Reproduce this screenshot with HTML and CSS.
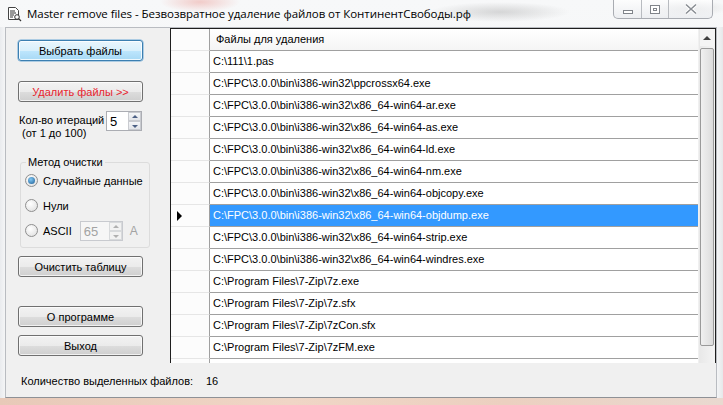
FILE: index.html
```html
<!DOCTYPE html>
<html>
<head>
<meta charset="utf-8">
<link rel="stylesheet" href="styles.css">
</head>
<body>
<div class="window">
  <div class="titlebar">
    <svg class="appicon" width="16" height="16" viewBox="0 0 16 16">
      <path d="M2.5 1.5h7l3 3v9h-10z" fill="#fff" stroke="#444"/>
      <path d="M4 5h5M4 7h6M4 9h4M4 11h3" stroke="#333"/>
      <circle cx="11" cy="11" r="2.3" fill="#fff" stroke="#333"/>
      <path d="M12.7 12.7l2.3 2.3" stroke="#333" stroke-width="1.2"/>
    </svg>
    <span class="title">Master remove files - Безвозвратное удаление файлов от КонтинентСвободы.рф</span>
    <div class="caption-buttons">
      <div class="cbtn cmin"><span class="minbar"></span></div>
      <div class="cbtn cmax"><span class="maxbox"></span></div>
      <div class="cbtn cclose">
        <svg width="14" height="12" viewBox="0 0 14 12"><path d="M2 1.5l10 9M12 1.5l-10 9" stroke="#fff" stroke-width="3.4"/><path d="M2 1.5l10 9M12 1.5l-10 9" stroke="#8a8e94" stroke-width="1.6"/></svg>
      </div>
    </div>
  </div>
  <div class="middle">
    <div class="frame-side"></div>
    <div class="client">
      <div class="leftpanel">
        <button class="btn btn-default">Выбрать файлы</button>
        <button class="btn btn-red">Удалить файлы &gt;&gt;</button>
        <div class="iter">
          <div class="iter-label">Кол-во итераций<br>&nbsp;(от 1 до 100)</div>
          <div class="spin">
            <span class="spin-val">5</span>
            <div class="spin-btns"><span class="sb up"></span><span class="sb down"></span></div>
          </div>
        </div>
        <fieldset class="group">
          <legend>Метод очистки</legend>
          <div class="radio-row"><span class="radio checked"></span><span>Случайные данные</span></div>
          <div class="radio-row"><span class="radio"></span><span>Нули</span></div>
          <div class="radio-row">
            <span class="radio"></span><span>ASCII</span>
            <div class="spin spin-disabled">
              <span class="spin-val">65</span>
              <div class="spin-btns"><span class="sb up"></span><span class="sb down"></span></div>
            </div>
            <span class="char-a">A</span>
          </div>
        </fieldset>
        <button class="btn btn-clear">Очистить таблицу</button>
        <button class="btn btn-about">О программе</button>
        <button class="btn btn-exit">Выход</button>
      </div>
      <div class="gridwrap">
        <div class="grid">
          <div class="grid-rows">
            <div class="row header"><div class="ind"></div><div class="cell">Файлы для удаления</div></div>
            <div class="row"><div class="ind"></div><div class="cell">C:\111\1.pas</div></div>
            <div class="row"><div class="ind"></div><div class="cell">C:\FPC\3.0.0\bin\i386-win32\ppcrossx64.exe</div></div>
            <div class="row"><div class="ind"></div><div class="cell">C:\FPC\3.0.0\bin\i386-win32\x86_64-win64-ar.exe</div></div>
            <div class="row"><div class="ind"></div><div class="cell">C:\FPC\3.0.0\bin\i386-win32\x86_64-win64-as.exe</div></div>
            <div class="row"><div class="ind"></div><div class="cell">C:\FPC\3.0.0\bin\i386-win32\x86_64-win64-ld.exe</div></div>
            <div class="row"><div class="ind"></div><div class="cell">C:\FPC\3.0.0\bin\i386-win32\x86_64-win64-nm.exe</div></div>
            <div class="row"><div class="ind"></div><div class="cell">C:\FPC\3.0.0\bin\i386-win32\x86_64-win64-objcopy.exe</div></div>
            <div class="row selected"><div class="ind"><span class="tri"></span></div><div class="cell">C:\FPC\3.0.0\bin\i386-win32\x86_64-win64-objdump.exe</div></div>
            <div class="row"><div class="ind"></div><div class="cell">C:\FPC\3.0.0\bin\i386-win32\x86_64-win64-strip.exe</div></div>
            <div class="row"><div class="ind"></div><div class="cell">C:\FPC\3.0.0\bin\i386-win32\x86_64-win64-windres.exe</div></div>
            <div class="row"><div class="ind"></div><div class="cell">C:\Program Files\7-Zip\7z.exe</div></div>
            <div class="row"><div class="ind"></div><div class="cell">C:\Program Files\7-Zip\7z.sfx</div></div>
            <div class="row"><div class="ind"></div><div class="cell">C:\Program Files\7-Zip\7zCon.sfx</div></div>
            <div class="row"><div class="ind"></div><div class="cell">C:\Program Files\7-Zip\7zFM.exe</div></div>
            <div class="row"><div class="ind"></div><div class="cell"></div></div>
          </div>
          <div class="vscroll">
            <div class="sarrow"><span class="uptri"></span></div>
            <div class="thumb"></div>
          </div>
        </div>
      </div>
      <div class="status">
        <span class="status-label">Количество выделенных файлов:</span>
        <span class="status-val">16</span>
      </div>
    </div>
    <div class="frame-side frame-right"></div>
  </div>
  <div class="frame-bottom"></div>
</div>
</body>
</html>
```
FILE: styles.css
```css
* { box-sizing: border-box; }
html, body { margin: 0; padding: 0; }
body {
  width: 723px;
  height: 405px;
  overflow: hidden;
  font-family: "Liberation Sans", Arial, sans-serif;
  font-size: 11px;
  color: #000;
  background: #f4f5f6;
}
.window {
  width: 723px;
  height: 405px;
  display: flex;
  flex-direction: column;
  background:
    radial-gradient(ellipse 40px 10px at 200px 2px, rgba(230,120,110,0.35), transparent),
    radial-gradient(ellipse 70px 10px at 500px 12px, rgba(150,150,150,0.35), transparent),
    radial-gradient(ellipse 40px 8px at 690px 8px, rgba(170,170,170,0.3), transparent),
    linear-gradient(to bottom, #f7f8f9, #eef0f2);
}
.titlebar {
  height: 27px;
  display: flex;
  align-items: flex-start;
  position: relative;
}
.appicon { margin: 6px 0 0 6px; flex: none; }
.title {
  margin: 6px 0 0 5px;
  font-family: "Open Sans", "Noto Sans", sans-serif;
  font-size: 11.5px;
  letter-spacing: -0.05px;
  color: #000;
  white-space: nowrap;
}
.caption-buttons {
  position: absolute;
  right: 10px;
  top: 0;
  height: 19px;
  display: flex;
  border: 1px solid #a9acb2;
  border-top: none;
  border-radius: 0 0 5px 5px;
  overflow: hidden;
  background: linear-gradient(to bottom, rgba(255,255,255,0.7), rgba(230,232,236,0.6));
}
.cbtn {
  height: 18px;
  display: flex;
  align-items: center;
  justify-content: center;
  border-right: 1px solid #b8bbc0;
}
.cmin { width: 28px; }
.cmax { width: 27px; }
.cclose { width: 43px; border-right: none; }
.minbar {
  width: 10px; height: 4px;
  border: 1px solid #80848a;
  background: #fff;
  margin-top: 5px;
}
.maxbox {
  width: 10px; height: 9px;
  border: 1px solid #80848a;
  background: #fff;
  box-shadow: inset 0 0 0 2px #fff, inset 0 0 0 3px #80848a;
}
.middle { flex: 1; display: flex; min-height: 0; }
.frame-side {
  width: 5px;
  background: linear-gradient(to right, #e9ebee, #f4f5f6);
}
.frame-right { width: 6px; background: linear-gradient(to right, #f4f5f6, #e6e8ea); }
.frame-bottom {
  height: 7px;
  background: linear-gradient(to right, #e8c9b8, #f0d6c6 40%, #ecd0c0 70%, #e9d9d0);
}
.client {
  flex: 1;
  background: #f0f0f0;
  border: 1px solid #b9bcc1;
  border-bottom: 1px solid #8e9196;
  display: grid;
  grid-template-columns: 164px 1fr;
  grid-template-rows: 335px 1fr;
}
.leftpanel {
  display: flex;
  flex-direction: column;
  align-items: flex-start;
  padding: 12px 0 0 12px;
}
.btn {
  width: 125px;
  height: 21px;
  margin: 0;
  padding: 0;
  font-family: "Liberation Sans", Arial, sans-serif;
  font-size: 11px;
  color: #000;
  border: 1px solid #707070;
  border-radius: 3px;
  background: linear-gradient(to bottom, #f2f2f2 0%, #ebebeb 50%, #dddddd 51%, #cfcfcf 100%);
  box-shadow: inset 0 0 0 1px rgba(255,255,255,0.7);
}
.btn-default {
  border-color: #3c7fb1;
  background: linear-gradient(to bottom, #eaf6fd 0%, #d9f0fc 50%, #bee6fd 51%, #a7d9f5 100%);
  box-shadow: inset 0 0 0 1px rgba(255,255,255,0.8), 0 0 0 0.5px #6aa8d6;
}
.btn-red { margin-top: 20px; color: #e8242f; }
.iter {
  display: flex;
  margin-top: 9px;
  margin-left: 1px;
}
.iter-label { line-height: 13px; margin-top: 3px; width: 87px; white-space: nowrap; }
.spin {
  width: 36px;
  height: 20px;
  background: #fff;
  border: 1px solid #abadb3;
  display: flex;
  justify-content: space-between;
  margin-left: 0;
}
.spin-val { padding: 2px 0 0 3px; font-size: 13px; }
.spin-btns { width: 13px; display: flex; flex-direction: column; }
.sb {
  flex: 1;
  border: 1px solid #c9cbd0;
  background: linear-gradient(#f5f6f8, #e3e5e9);
  position: relative;
}
.sb::after {
  content: "";
  position: absolute;
  left: 3px;
  top: 2px;
  border-left: 3px solid transparent;
  border-right: 3px solid transparent;
}
.sb.up::after { border-bottom: 3px solid #4d6185; }
.sb.down::after { border-top: 3px solid #4d6185; top: 3px; }
.group {
  width: 130px;
  height: 92px;
  margin: 16px 0 0 2px;
  padding: 0 0 0 4px;
  border: 1px solid #dcdcdc;
  border-radius: 3px;
}
.group legend { padding: 0 2px; margin-left: 1px; font-size: 11px; }
.radio-row { display: flex; align-items: center; height: 25px; white-space: nowrap; }
.radio {
  width: 13px; height: 13px;
  border-radius: 50%;
  border: 1px solid #8f8f8f;
  background: radial-gradient(circle at 40% 35%, #ffffff, #dcdcdc);
  margin-right: 5px;
  flex: none;
  position: relative;
}
.radio.checked::after {
  content: "";
  position: absolute;
  left: 2px; top: 2px;
  width: 7px; height: 7px;
  border-radius: 50%;
  background: radial-gradient(circle at 40% 35%, #82c8f4, #1c5c93);
}
.spin-disabled {
  width: 43px;
  height: 20px;
  margin-left: 8px;
  border-color: #c8cacf;
  background: #f6f6f6;
}
.spin-disabled .spin-val { color: #a3a3a3; font-size: 13px; }
.spin-disabled .sb { border-color: #d8dadc; background: #f2f2f2; }
.spin-disabled .sb.up::after { border-bottom-color: #b0b0b0; }
.spin-disabled .sb.down::after { border-top-color: #b0b0b0; }
.char-a { margin-left: 7px; color: #a3a3a3; font-size: 12px; }
.btn-clear { margin-top: 8px; }
.btn-about { margin-top: 29px; }
.btn-exit { margin-top: 8px; }
.gridwrap {
  position: relative;
  overflow: hidden;
}
.grid {
  height: 335px;
  width: 546px;
  border: 1px solid #1e1e1e;
  border-bottom: none;
  background: #fff;
  display: flex;
  overflow: hidden;
}
.grid-rows { flex: 1; }
.row {
  height: 22px;
  display: flex;
  border-bottom: 1px solid #a0a0a0;
}
.ind {
  width: 39px;
  flex: none;
  background: #fcfcfc;
  border-right: 1px solid #a0a0a0;
  border-bottom: 1px solid #e6e6e6;
  margin-bottom: -1px;
  display: flex;
  align-items: center;
  padding-left: 6px;
}
.cell {
  flex: 1;
  padding: 4px 0 0 3px;
  white-space: nowrap;
}
.header {
  height: 22px;
  background: linear-gradient(#ffffff, #f5f5f5);
  border-bottom: 1px solid #a0a0a0;
}
.header .cell { padding-left: 6px; }
.selected .cell { background: #3399ff; color: #fff; }
.tri {
  width: 0; height: 0;
  border-top: 5px solid transparent;
  border-bottom: 5px solid transparent;
  border-left: 5px solid #000;
}
.vscroll {
  width: 17px;
  flex: none;
  background: linear-gradient(to right, #e8e8e8, #f4f4f4);
  border-left: 1px solid #f0f0f0;
  display: flex;
  flex-direction: column;
  padding: 0 1px;
}
.sarrow {
  height: 17px;
  display: flex;
  align-items: center;
  justify-content: center;
  background: #f4f4f4;
}
.uptri {
  border-left: 4px solid transparent;
  border-right: 4px solid transparent;
  border-bottom: 4px solid #404040;
}
.thumb {
  margin-top: 2px;
  height: 298px;
  border: 1px solid #9a9a9a;
  border-radius: 2px;
  background: linear-gradient(to right, #f0f0f0, #dcdcdc);
}
.status {
  grid-column: 1 / span 2;
  display: flex;
  align-items: center;
  padding-left: 15px;
  padding-top: 1px;
  white-space: nowrap;
}
.status-label { width: 185px; }
```
